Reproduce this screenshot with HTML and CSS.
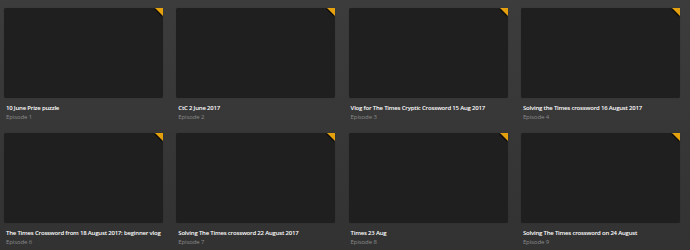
FILE: index.html
```html
<!DOCTYPE html>
<html>
<head>
<meta charset="utf-8">
<link rel="stylesheet" href="styles.css">
</head>
<body>
<div class="grid">
  <div class="item"><div class="poster"><span class="flag"></span></div><div class="title">10 June Prize puzzle</div><div class="sub">Episode 1</div></div>
  <div class="item"><div class="poster"><span class="flag"></span></div><div class="title">CtC 2 June 2017</div><div class="sub">Episode 2</div></div>
  <div class="item"><div class="poster"><span class="flag"></span></div><div class="title">Vlog for The Times Cryptic Crossword 15 Aug 2017</div><div class="sub">Episode 3</div></div>
  <div class="item"><div class="poster"><span class="flag"></span></div><div class="title">Solving the Times crossword 16 August 2017</div><div class="sub">Episode 4</div></div>
  <div class="item"><div class="poster"><span class="flag"></span></div><div class="title">The Times Crossword from 18 August 2017: beginner vlog</div><div class="sub">Episode 6</div></div>
  <div class="item"><div class="poster"><span class="flag"></span></div><div class="title">Solving The Times crossword 22 August 2017</div><div class="sub">Episode 7</div></div>
  <div class="item"><div class="poster"><span class="flag"></span></div><div class="title">Times 23 Aug</div><div class="sub">Episode 8</div></div>
  <div class="item"><div class="poster"><span class="flag"></span></div><div class="title">Solving The Times crossword on 24 August</div><div class="sub">Episode 9</div></div>
</div>
</body>
</html>
```
FILE: styles.css
```css
html, body {
  margin: 0;
  height: 100%;
}
body {
  background: linear-gradient(to bottom, #3c3c3c 0%, #363636 60%, #323232 100%);
  font-family: "Open Sans", "Liberation Sans", sans-serif;
  overflow: hidden;
}
.grid {
  display: grid;
  grid-template-columns: repeat(4, 159px);
  grid-auto-rows: 125px;
  column-gap: 13.3px;
  padding: 8px 4px 0 4px;
}
.item {
  display: flex;
  flex-direction: column;
}
.poster {
  position: relative;
  height: 90px;
  background: #1f1f1f;
  border-radius: 2px;
  box-shadow: 0 0 1px rgba(0,0,0,0.3);
}
.flag {
  position: absolute;
  top: 0;
  right: 0;
  width: 0;
  height: 0;
  border-style: solid;
  border-width: 0 8px 8px 0;
  border-color: transparent #e5a00d transparent transparent;
  filter: drop-shadow(-1px 1px 0 rgba(0,0,0,0.6));
}
.title {
  margin-top: 5.5px;
  padding-left: 2px;
  font-size: 6px;
  letter-spacing: -0.2px;
  font-weight: 600;
  color: #ffffff;
  line-height: 9px;
  white-space: nowrap;
}
.sub {
  padding-left: 2px;
  font-size: 6px;
  letter-spacing: -0.1px;
  color: #8a8a8a;
  line-height: 9px;
}
```
